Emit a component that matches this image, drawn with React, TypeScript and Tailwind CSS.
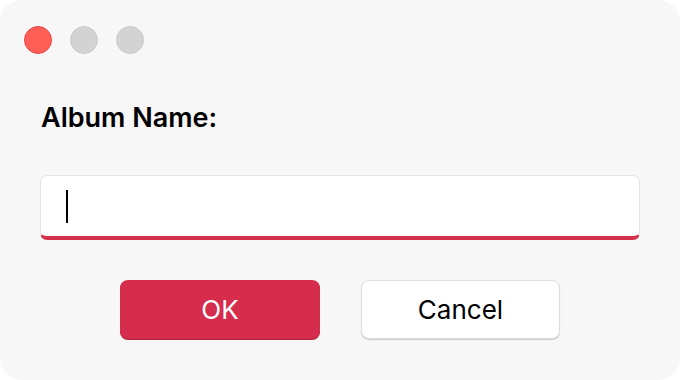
export default function App() {
  return (
    <div className="w-[680px] h-[380px] bg-white" style={{ fontFamily: 'Inter, "Liberation Sans", sans-serif' }}>
      <div className="h-full rounded-[22px] bg-[#f7f7f7] flex flex-col">
        {/* Traffic lights */}
        <div className="flex gap-[18px] pl-[24px] pt-[26px]">
          <div className="w-[28px] h-[28px] rounded-full bg-[#ff5f57] border border-[#e5483f]"></div>
          <div className="w-[28px] h-[28px] rounded-full bg-[#d3d3d3] border border-[#c9c9c9]"></div>
          <div className="w-[28px] h-[28px] rounded-full bg-[#d3d3d3] border border-[#c9c9c9]"></div>
        </div>

        <label className="mt-[48px] ml-[41px] text-[27px] leading-[32px] font-semibold text-black">
          Album Name:
        </label>

        {/* Input */}
        <div className="mt-[41px] mx-[40px] h-[65px] rounded-[7px] bg-white border border-[#e4e4e4] border-b-[4px] border-b-[#d42f4b] flex items-center pl-[25px]">
          <div className="w-[2px] h-[33px] bg-black"></div>
        </div>

        {/* Buttons */}
        <div className="mt-[40px] flex justify-center gap-[41px]">
          <button className="w-[200px] h-[59px] rounded-[8px] bg-[#d52d4b] text-white text-[26px] shadow-[0_1px_0_#a6233b]">
            OK
          </button>
          <button className="w-[199px] h-[59px] rounded-[8px] bg-white border border-[#dedede] text-black text-[26px] shadow-[0_1px_1px_rgba(0,0,0,0.18)]">
            Cancel
          </button>
        </div>
      </div>
    </div>
  );
}
